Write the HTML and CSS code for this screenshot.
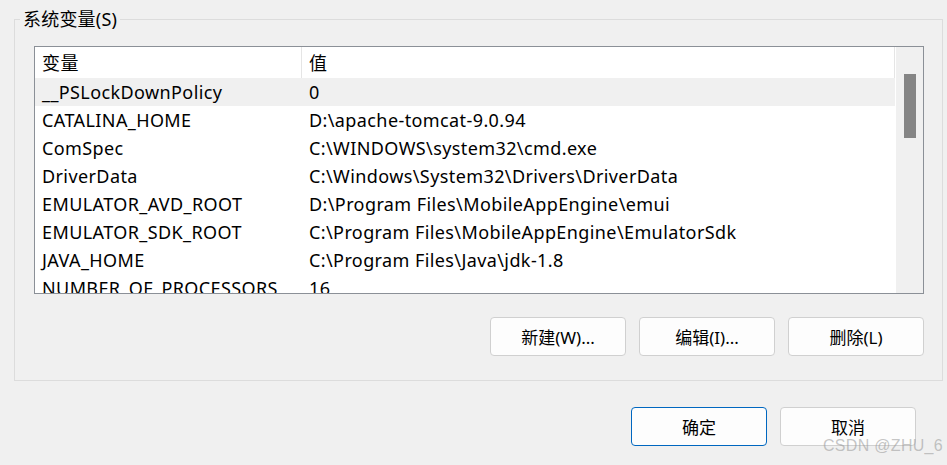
FILE: index.html
```html
<!DOCTYPE html>
<html lang="zh-CN">
  <head>
    <meta charset="UTF-8" />
    <title>系统变量</title>
    <link rel="stylesheet" href="styles.css">
  </head>
  <body>
    <fieldset class="group">
      <legend>系统变量(S)</legend>
      <div class="list">
        <div class="list-body">
          <div class="row head">
            <div class="col name">变量</div>
            <div class="col value">值</div>
          </div>
          <div class="row selected">
            <div class="col name">__PSLockDownPolicy</div>
            <div class="col value">0</div>
          </div>
          <div class="row">
            <div class="col name">CATALINA_HOME</div>
            <div class="col value">D:\apache-tomcat-9.0.94</div>
          </div>
          <div class="row">
            <div class="col name">ComSpec</div>
            <div class="col value">C:\WINDOWS\system32\cmd.exe</div>
          </div>
          <div class="row">
            <div class="col name">DriverData</div>
            <div class="col value">C:\Windows\System32\Drivers\DriverData</div>
          </div>
          <div class="row">
            <div class="col name">EMULATOR_AVD_ROOT</div>
            <div class="col value">D:\Program Files\MobileAppEngine\emui</div>
          </div>
          <div class="row">
            <div class="col name">EMULATOR_SDK_ROOT</div>
            <div class="col value">C:\Program Files\MobileAppEngine\EmulatorSdk</div>
          </div>
          <div class="row">
            <div class="col name">JAVA_HOME</div>
            <div class="col value">C:\Program Files\Java\jdk-1.8</div>
          </div>
          <div class="row">
            <div class="col name">NUMBER_OF_PROCESSORS</div>
            <div class="col value">16</div>
          </div>
        </div>
        <div class="scrollbar">
          <div class="thumb"></div>
        </div>
      </div>
      <div class="actions">
        <button class="btn">新建(W)...</button>
        <button class="btn">编辑(I)...</button>
        <button class="btn">删除(L)</button>
      </div>
    </fieldset>
    <div class="footer">
      <button class="btn primary">确定</button>
      <button class="btn">取消</button>
    </div>
    <div class="watermark">CSDN @ZHU_6</div>
  </body>
</html>
```

FILE: styles.css
```css
* {
  margin: 0;
  padding: 0;
  box-sizing: border-box;
}
body {
  width: 947px;
  height: 465px;
  overflow: hidden;
  background-color: #f0f0f0;
  font-family: "Noto Sans", "Noto Sans CJK SC", sans-serif;
  font-size: 18px;
  letter-spacing: 0.4px;
  color: #000;
  position: relative;
}
.group {
  margin: 9px 4px 0 14px;
  height: 372px;
  border: 1px solid #dcdcdc;
  padding: 0 18px 0 19px;
}
.group legend {
  margin-left: -14px;
  padding: 0 3px;
  font-size: 18px;
  letter-spacing: 0.2px;
  line-height: 20px;
  height: 20px;
}
.list {
  margin-top: 17px;
  height: 248px;
  border: 1px solid #8b9097;
  background-color: #fff;
  display: flex;
  overflow: hidden;
}
.list-body {
  flex: 1;
}
.row {
  display: flex;
  height: 28px;
  line-height: 28px;
  white-space: nowrap;
}
.row.head {
  height: 31px;
  line-height: 32px;
  border-right: 1px solid #e5e5e5;
}
.row.selected {
  background-color: #f0f0f0;
}
.col {
  overflow: hidden;
}
.name {
  width: 267px;
  padding-left: 7px;
}
.head .name {
  border-right: 1px solid #e5e5e5;
}
.value {
  flex: 1;
  padding-left: 7px;
}
.scrollbar {
  width: 27px;
  margin-left: 1px;
  background-color: #f0f0f0;
  padding: 27px 7px 0 8px;
}
.thumb {
  height: 64px;
  background-color: #858585;
}
.actions {
  display: flex;
  justify-content: flex-end;
  gap: 13px;
  margin-top: 23px;
}
.btn {
  width: 136px;
  height: 39px;
  border: 1px solid #d0d0d0;
  border-radius: 4px;
  background-color: #fdfdfd;
  font-family: "Noto Sans", "Noto Sans CJK SC", sans-serif;
  font-size: 17px;
  color: #000;
}
.footer {
  display: flex;
  justify-content: flex-end;
  gap: 13px;
  margin-top: 26px;
  padding-right: 31px;
}
.btn.primary {
  border-color: #0067c0;
}
.watermark {
  position: absolute;
  right: 4px;
  bottom: 10px;
  font-family: "Liberation Sans", sans-serif;
  font-size: 16px;
  letter-spacing: 0.3px;
  color: rgba(150, 150, 150, 0.55);
}
```
